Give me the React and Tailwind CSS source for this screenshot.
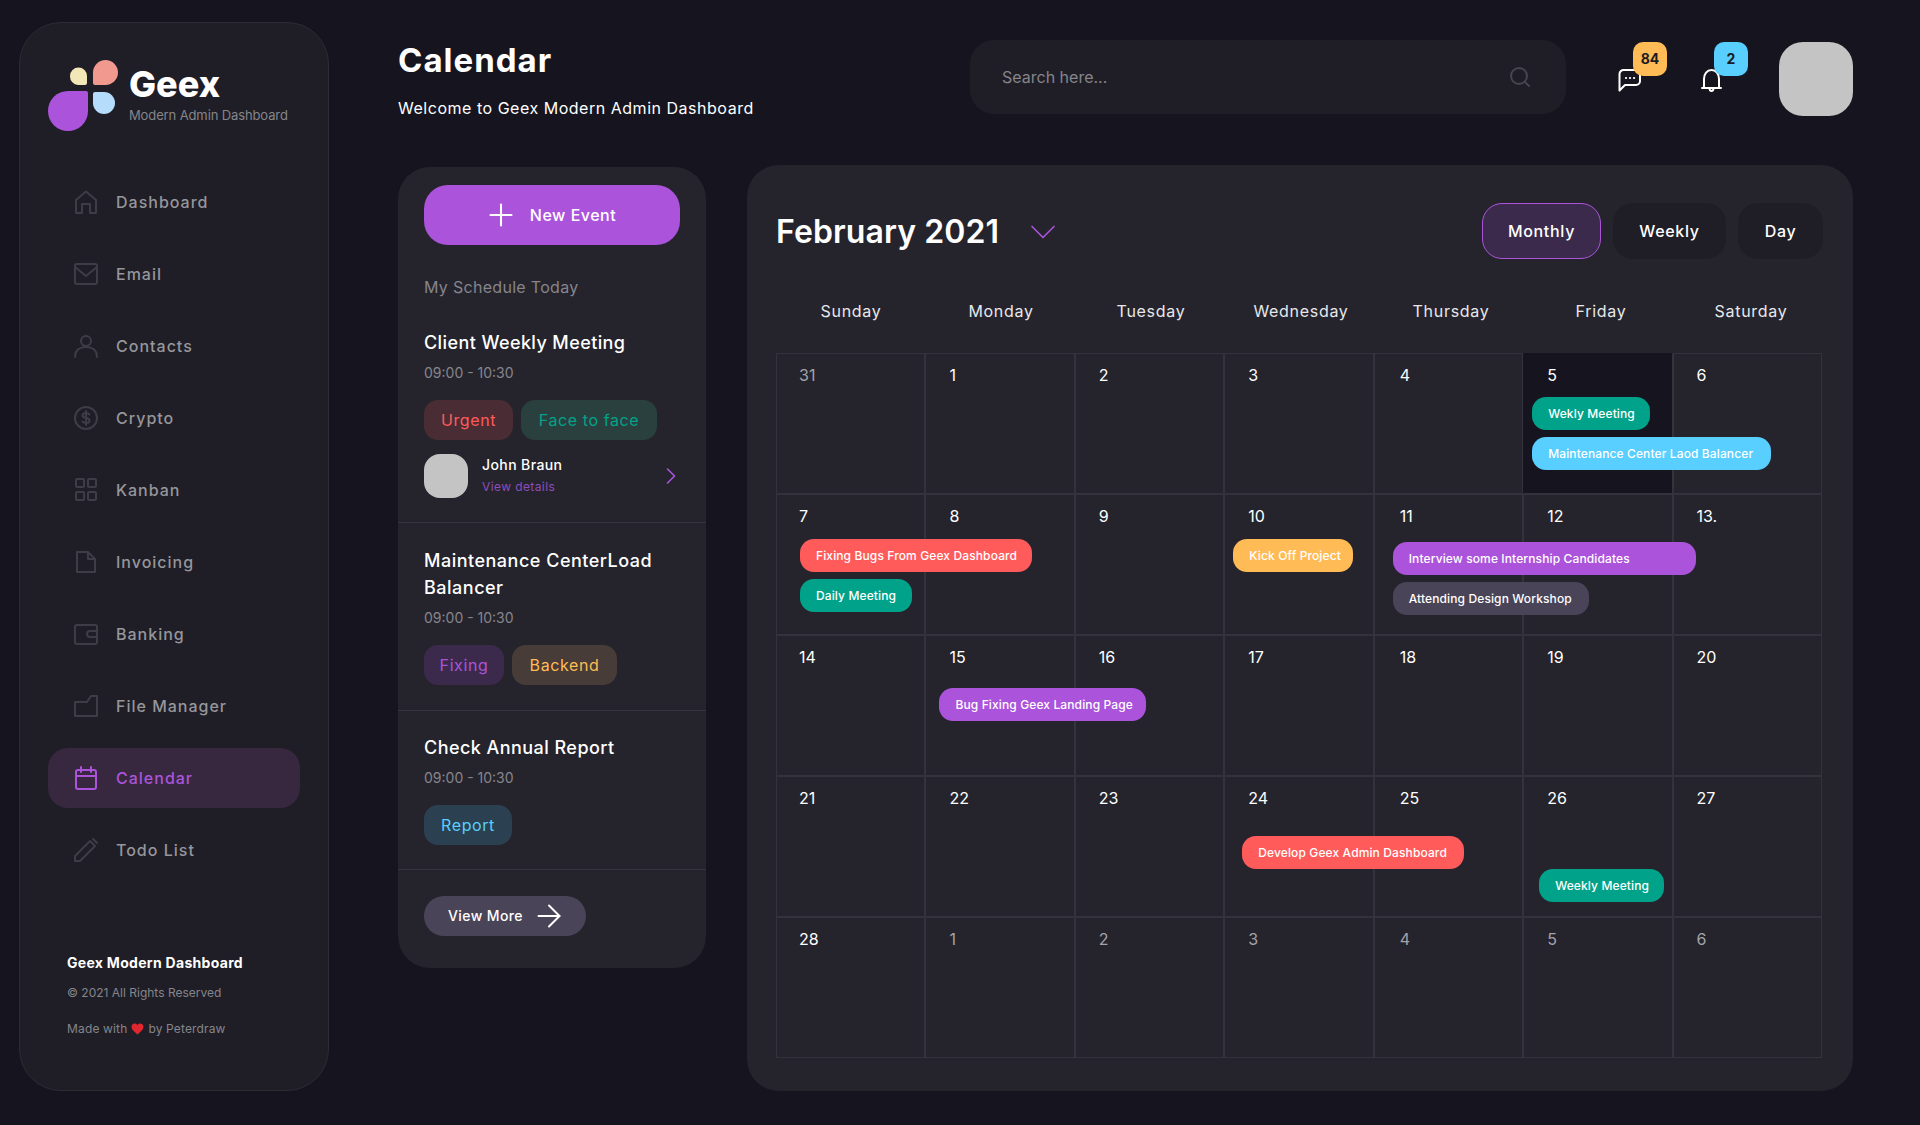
import React from 'react';
import { ChevronRight, ChevronDown, Plus, ArrowRight, Search } from 'lucide-react';

const Logo = () => (
  <svg width="70" height="71" viewBox="0 0 70 71" className="shrink-0">
    <path d="M38 31 a2 2 0 0 1 2 2 V51 A20 20 0 1 1 20 31 Z" fill="#AB54DB" />
    <path d="M70 12.5 A12.5 12.5 0 0 1 57.5 25 H47 a2 2 0 0 1 -2 -2 V12.5 A12.5 12.5 0 0 1 70 12.5 Z" fill="#F1998E" />
    <path d="M22 8 a8.500 8.500 0 0 1 17 0 V15 a2 2 0 0 1 -2 2 H30 A8.500 8.500 0 0 1 22 8.500 Z" transform="translate(0 8)" fill="#F2E7B6" />
    <path d="M45 34 a2 2 0 0 1 2 -2 H56 A11 11 0 1 1 45 43 Z" fill="#B6DCFB" />
  </svg>
);

const icon = 'w-6 h-6 shrink-0';

const NavIcon = ({ name, color }) => {
  const p = { fill: 'none', stroke: color, strokeWidth: 2, strokeLinejoin: 'round', strokeLinecap: 'round' };
  return (
    <svg viewBox="0 0 24 24" className={icon} {...p}>
      {name === 'home' && <path d="M2 23 V10 L12 1.500 L22 10 V23 H16 V14 H8 V23 Z" />}
      {name === 'mail' && <><rect x="1" y="2" width="22" height="20" rx="2" /><path d="M1 5 L12 14 L23 5" /></>}
      {name === 'user' && <><circle cx="12" cy="7" r="5" /><path d="M1 23 C1 16 6 13 12 13 C18 13 23 16 23 23" /></>}
      {name === 'crypto' && <><circle cx="12" cy="12" r="11" /><path d="M15.500 8.500 C15 7.500 14 7 12 7 C10 7 8.500 8 8.500 9.500 C8.500 13 15.500 11 15.500 14.500 C15.500 16 14 17 12 17 C10 17 9 16.500 8.500 15.500 M12 5 V19" /></>}
      {name === 'kanban' && <><rect x="2" y="1" width="8" height="8" rx="1" /><rect x="14" y="1" width="8" height="8" rx="1" /><rect x="2" y="14" width="8" height="8" rx="1" /><rect x="14" y="14" width="8" height="8" rx="1" /></>}
      {name === 'invoice' && <path d="M3 2 H14 L21 9 V22 H3 Z M14 2 V9 H21" />}
      {name === 'bank' && <><rect x="1" y="3" width="22" height="19" rx="2" /><path d="M23 9 H16 a3 3 0 0 0 0 6 H23" /></>}
      {name === 'folder' && <path d="M1 8 H13 L17 2 H23 V22 H1 Z" />}
      {name === 'calendar' && <><rect x="2" y="4" width="20" height="19" rx="2" /><path d="M2 10 H22 M7 1 V6 M17 1 V6" /></>}
      {name === 'todo' && <path d="M1 23 V18 L16 3 L21 8 L6 23 Z M19 1 L23 5" />}
    </svg>
  );
};

const navItems = [
  ['home', 'Dashboard'],
  ['mail', 'Email'],
  ['user', 'Contacts'],
  ['crypto', 'Crypto'],
  ['kanban', 'Kanban'],
  ['invoice', 'Invoicing'],
  ['bank', 'Banking'],
  ['folder', 'File Manager'],
  ['calendar', 'Calendar'],
  ['todo', 'Todo List'],
];

const Sidebar = () => (
  <aside className="w-[310px] h-[1069px] mt-[22px] ml-[19px] shrink-0 flex flex-col bg-[#1f1e26] border border-[#2c2c35] rounded-[42px] pt-[37px] pb-[53px]">
    <div className="flex ml-[28px]">
      <Logo />
      <div className="ml-[11px] mt-1">
        <div className="text-[36px] leading-10 font-extrabold text-white">Geex</div>
        <div className="text-[13px] leading-5 mt-[1px] text-[#85858b] tracking-[-0.12px] whitespace-nowrap">Modern Admin Dashboard</div>
      </div>
    </div>
    <nav className="flex flex-col gap-3 mt-[41px] mx-[28px]">
      {navItems.map(([name, label]) => {
        const active = label === 'Calendar';
        return (
          <div key={label} className={`h-[60px] flex items-center gap-[18px] pl-[26px] rounded-[20px] ${active ? 'bg-[#38283f]' : ''}`}>
            <NavIcon name={name} color={active ? '#AB54DB' : '#3e3d47'} />
            <span className={`text-base font-medium tracking-[1px] ${active ? 'text-[#ab54db]' : 'text-[#96969b]'}`}>{label}</span>
          </div>
        );
      })}
    </nav>
    <div className="mt-auto ml-[47px]">
      <div className="text-sm leading-5 font-bold text-white tracking-[0.3px]">Geex Modern Dashboard</div>
      <div className="text-xs leading-4 mt-[12px] text-[#85858b]">© 2021 All Rights Reserved</div>
      <div className="text-xs leading-4 mt-[20px] text-[#85858b] flex items-center tracking-[0.15px]">
        Made with
        <svg viewBox="0 0 24 22" className="w-[13px] h-3 mx-1">
          <path d="M12 21 C4 15 1 11 1 7 C1 3 4 1 7 1 C9 1 11 2 12 4 C13 2 15 1 17 1 C20 1 23 3 23 7 C23 11 20 15 12 21 Z" fill="#E0272F" />
        </svg>
        by Peterdraw
      </div>
    </div>
  </aside>
);

const Header = () => (
  <header className="h-[129px] flex items-start">
    <div className="w-[572px] shrink-0">
      <h1 className="text-[33px] leading-[48px] font-bold text-white tracking-[1px]">Calendar</h1>
      <p className="text-base leading-6 mt-3 text-white tracking-[0.52px]">Welcome to Geex Modern Admin Dashboard</p>
    </div>
    <div className="w-[596px] h-[74px] mt-1 shrink-0 flex items-center justify-between pl-8 pr-[34px] bg-[#1f1e26] rounded-3xl">
      <span className="text-base text-[#85858b]">Search here...</span>
      <Search className="w-6 h-6 text-[#45444f]" strokeWidth={2} />
    </div>
    <div className="relative w-6 h-6 mt-8 ml-[52px] shrink-0">
      <svg viewBox="0 0 24 24" className="w-6 h-6" fill="none" stroke="#fff" strokeWidth="2" strokeLinejoin="round">
        <path d="M1.500 22.500 V6 a4 4 0 0 1 4 -4 H18 a4 4 0 0 1 4 4 V13 a4 4 0 0 1 -4 4 H7 Z" />
        <path d="M8 10 H8.100 M12 10 H12.100 M16 10 H16.100" strokeLinecap="round" strokeWidth="2.200" />
      </svg>
      <div className="absolute left-[15px] top-[-26px] w-[34px] h-[34px] rounded-[10px] bg-[#ffbb55] flex items-center justify-center text-sm font-bold text-[#1c1b22]">84</div>
    </div>
    <div className="relative w-[21px] h-6 mt-8 ml-[59px] shrink-0">
      <svg viewBox="0 0 21 24" className="w-[21px] h-6" fill="none" stroke="#fff" strokeWidth="2" strokeLinejoin="round" strokeLinecap="round">
        <path d="M1 20 H20 M3 20 V11 C3 6 6 2 10.500 2 C15 2 18 6 18 11 V20 M8.500 20 C8.500 22 9.500 23 10.500 23 C11.500 23 12.500 22 12.500 20" />
      </svg>
      <div className="absolute left-[13px] top-[-26px] w-[34px] h-[34px] rounded-[10px] bg-[#58cfff] flex items-center justify-center text-sm font-bold text-[#1c1b22]">2</div>
    </div>
    <div className="w-[74px] h-[74px] mt-[6px] ml-[57px] shrink-0 rounded-3xl bg-[#c4c4c4]" />
  </header>
);

const tagStyles = {
  Urgent: 'w-[89px] bg-[#4a2d34] text-[#ff5b5b]',
  'Face to face': 'w-[136px] bg-[#2a403f] text-[#00a389]',
  Fixing: 'w-20 bg-[#3c2a4d] text-[#ab54db]',
  Backend: 'w-[105px] bg-[#483c38] text-[#ffbb55]',
  Report: 'w-[88px] bg-[#2b4050] text-[#58cfff]',
};

const Tags = ({ items }) => (
  <div className="flex gap-2 mt-[17px]">
    {items.map((t) => (
      <span key={t} className={`h-10 rounded-[14px] flex items-center justify-center text-base tracking-[0.6px] whitespace-nowrap ${tagStyles[t]}`}>{t}</span>
    ))}
  </div>
);

const Time = ({ className }) => (
  <div className={`text-sm leading-5 text-[#85858b] ${className}`}>09:00 - 10:30</div>
);

const SchedulePanel = () => (
  <section className="w-[308px] h-[801px] mt-[2px] shrink-0 bg-[#25242d] rounded-[32px] flex flex-col">
    <div className="px-[26px] pt-[18px] pb-6 border-b border-[#36353f]">
      <button className="w-[256px] h-[60px] rounded-3xl bg-[#ab54db] flex items-center justify-center gap-[11px] text-white text-base font-medium tracking-[0.5px]">
        <Plus className="w-9 h-9 -ml-[5px]" strokeWidth={1.4} />
        New Event
      </button>
      <div className="text-base leading-6 mt-[30px] text-[#85858b] tracking-[0.3px]">My Schedule Today</div>
      <h3 className="text-lg leading-7 mt-[30px] font-medium text-white tracking-[0.4px]">Client Weekly Meeting</h3>
      <Time className="mt-[6px]" />
      <Tags items={['Urgent', 'Face to face']} />
      <div className="flex items-center mt-[14px]">
        <div className="w-11 h-11 rounded-2xl bg-[#c4c4c4] shrink-0" />
        <div className="ml-[14px] flex-1 -mt-[2px]">
          <div className="text-sm leading-5 font-medium text-white tracking-[0.4px]">John Braun</div>
          <div className="text-xs leading-4 mt-1 text-[#8e4dba] tracking-[0.4px]">View details</div>
        </div>
        <ChevronRight className="w-7 h-7 text-[#ab54db] -mr-[5px]" strokeWidth={1.4} />
      </div>
    </div>
    <div className="px-[26px] pt-6 pb-[25px] border-b border-[#36353f]">
      <h3 className="text-lg leading-[27px] font-medium text-white tracking-[0.5px]">Maintenance CenterLoad Balancer</h3>
      <Time className="mt-[7px]" />
      <Tags items={['Fixing', 'Backend']} />
    </div>
    <div className="px-[26px] pt-[23px] pb-6 border-b border-[#36353f]">
      <h3 className="text-lg leading-7 font-medium text-white tracking-[0.45px]">Check Annual Report</h3>
      <Time className="mt-[6px]" />
      <Tags items={['Report']} />
    </div>
    <div className="px-[26px] pt-[26px]">
      <button className="w-[162px] h-10 rounded-[20px] bg-[#4a4458] flex items-center pl-6 gap-2 text-white text-sm font-medium tracking-[0.4px]">
        View More
        <ArrowRight className="w-9 h-9" strokeWidth={1.3} />
      </button>
    </div>
  </section>
);

const green = 'bg-[#00a389]';
const red = 'bg-[#ff5b5b]';
const purple = 'bg-[#ab54db]';

// keyed by index in the grid, classes place the pill inside its cell
const events = {
  5: [
    { label: 'Wekly Meeting', cls: `w-[118px] ml-2 mt-3 ${green}` },
    { label: 'Maintenance Center Laod Balancer', cls: 'w-[239px] ml-2 mt-[7px] bg-[#58cfff]' },
  ],
  7: [
    { label: 'Fixing Bugs From Geex Dashboard', cls: `w-[232px] ml-[23px] mt-[13px] ${red}` },
    { label: 'Daily Meeting', cls: `w-[112px] ml-[23px] mt-[7px] ${green}` },
  ],
  10: [{ label: 'Kick Off Project', cls: 'w-[120px] ml-2 mt-[13px] bg-[#ffbb55]' }],
  11: [
    { label: 'Interview some Internship Candidates', cls: `w-[303px] ml-[18px] mt-4 ${purple}` },
    { label: 'Attending Design Workshop', cls: 'w-[196px] ml-[18px] mt-[7px] bg-[#4a4458]' },
  ],
  15: [{ label: 'Bug Fixing Geex Landing Page', cls: `w-[207px] ml-[13px] mt-[21px] ${purple}` }],
  24: [{ label: 'Develop Geex Admin Dashboard', cls: `w-[222px] ml-[17px] mt-7 ${red}` }],
  26: [{ label: 'Weekly Meeting', cls: `w-[125px] ml-[15px] mt-[61px] ${green}` }],
};

const days = [
  31, 1, 2, 3, 4, 5, 6,
  7, 8, 9, 10, 11, 12, '13.',
  14, 15, 16, 17, 18, 19, 20,
  21, 22, 23, 24, 25, 26, 27,
  28, 1, 2, 3, 4, 5, 6,
];

const numberIndent = ['ml-[22px]', 'ml-[23px]', 'ml-[23px]', 'ml-[23px]', 'ml-[25px]', 'ml-[23px]', 'ml-[23px]'];

const CalendarPanel = () => (
  <section className="w-[1106px] h-[926px] ml-[41px] shrink-0 bg-[#25242d] rounded-[32px] pt-[38px] px-[29px]">
    <div className="flex items-center h-14">
      <h2 className="text-[32px] leading-10 font-semibold text-white tracking-[0.1px] mt-[2px]">February 2021</h2>
      <ChevronDown className="w-11 h-11 ml-[22px] mt-[2px] text-[#ab54db]" strokeWidth={0.9} />
      <div className="ml-auto mr-[1px] flex items-center gap-3 text-base font-medium text-white tracking-[0.7px]">
        <button className="w-[119px] h-14 rounded-[20px] bg-[#3c2a4d] border border-[#ab54db]">Monthly</button>
        <button className="w-[113px] h-14 rounded-[20px] bg-[#1f1e26]">Weekly</button>
        <button className="w-[85px] h-14 rounded-[20px] bg-[#1f1e26]">Day</button>
      </div>
    </div>
    <div className="grid grid-cols-7 w-[1050px] mt-10 mb-[30px] text-center text-base leading-6 text-[#e8e8ea] tracking-[0.7px]">
      {['Sunday', 'Monday', 'Tuesday', 'Wednesday', 'Thursday', 'Friday', 'Saturday'].map((d) => (
        <div key={d}>{d}</div>
      ))}
    </div>
    <div className="grid grid-cols-7 w-[1046px]">
      {days.map((d, i) => {
        const muted = i === 0 || i >= 29;
        const today = i === 5;
        return (
          <div
            key={i}
            className={`h-[141px] border flex flex-col items-start ${today ? 'bg-[#16151f] border-t-transparent border-l-transparent border-r-[#33333d] border-b-[#33333d]' : 'border-[#33333d]'}`}
          >
            <div className={`mt-[11px] h-5 text-base leading-5 ${numberIndent[i % 7]} ${muted ? 'text-[#a3a3a8]' : 'text-white'}`}>{d}</div>
            {(events[i] || []).map((e) => (
              <div
                key={e.label}
                className={`relative z-10 h-[33px] shrink-0 rounded-[14px] pl-4 flex items-center text-xs font-medium text-white tracking-[0.12px] whitespace-nowrap ${e.cls}`}
              >
                {e.label}
              </div>
            ))}
          </div>
        );
      })}
    </div>
  </section>
);

const App = () => (
  <div className="w-[1920px] h-[1125px] overflow-hidden flex bg-[#16151f] font-['Inter',sans-serif]">
    <Sidebar />
    <main className="ml-[69px] w-[1455px] pt-9 shrink-0">
      <Header />
      <div className="flex items-start">
        <SchedulePanel />
        <CalendarPanel />
      </div>
    </main>
  </div>
);

export default App;
